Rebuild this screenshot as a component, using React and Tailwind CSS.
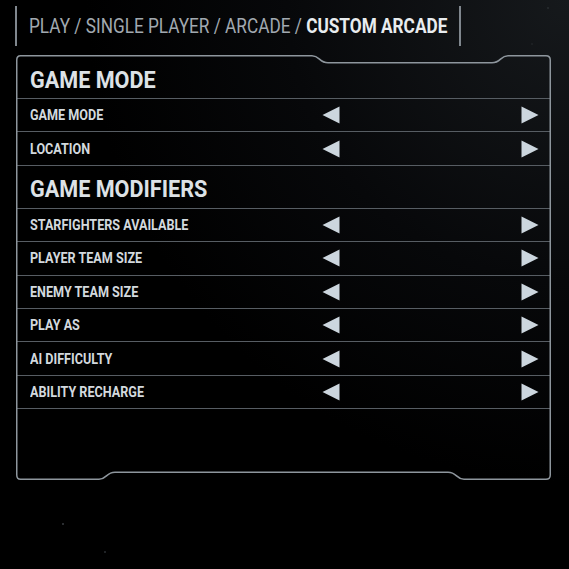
import React from 'react';

const font = { fontFamily: 'Roboto, "Liberation Sans", sans-serif' };

const sections = [
    { title: 'GAME MODE', rows: ['GAME MODE', 'LOCATION'] },
    {
        title: 'GAME MODIFIERS',
        rows: ['STARFIGHTERS AVAILABLE', 'PLAYER TEAM SIZE', 'ENEMY TEAM SIZE', 'PLAY AS', 'AI DIFFICULTY', 'ABILITY RECHARGE'],
    },
];

function Arrow({ dir }) {
    return (
        <svg width="18" height="18" viewBox="0 0 18 18">
            {dir === 'left' ? (
                <polygon points="17.5,0.5 17.5,17.5 0.5,9" fill="#ccd6de" />
            ) : (
                <polygon points="0.5,0.5 0.5,17.5 17.5,9" fill="#ccd6de" />
            )}
        </svg>
    );
}

function Frame() {
    const d = [
        'M 4.5 0.75',
        'L 296 0.75',
        'C 304 0.75 303 7.75 312 7.75',
        'L 476 7.75',
        'C 485 7.75 484 0.75 492 0.75',
        'L 530 0.75',
        'Q 534.25 0.75 534.25 5',
        'L 534.25 420',
        'Q 534.25 424.25 530 424.25',
        'L 448 424.25',
        'C 440 424.25 441 417.25 432 417.25',
        'L 99 417.25',
        'C 90 417.25 91 424.25 83 424.25',
        'L 4.5 424.25',
        'Q 0.75 424.25 0.75 420',
        'L 0.75 5',
        'Q 0.75 0.75 4.5 0.75 Z',
    ].join(' ');
    return (
        <svg className="absolute inset-0 pointer-events-none" width="535" height="425" viewBox="0 0 535 425">
            <path d={d} fill="none" stroke="#8e969d" strokeWidth="1.5" />
        </svg>
    );
}

export default function App() {
    return (
        <div
            className="relative w-[569px] h-[569px] overflow-hidden bg-black pt-[6px]"
            style={{ ...font, backgroundImage: 'radial-gradient(circle at 100% 0%, #16191c 0%, #07080a 35%, #000 60%)' }}
        >
            <div className="ml-[15px] w-[446px] h-[40px] border-l-2 border-r-2 border-[#80878e] flex items-center pl-[12px]">
                <span className="inline-block whitespace-nowrap origin-left scale-x-[0.82] text-[21px] leading-none text-[#a1a9b0]">
                    PLAY / SINGLE PLAYER / ARCADE / <span className="font-bold text-[#e8ecef]">CUSTOM ARCADE</span>
                </span>
            </div>

            <div className="relative ml-[16px] mt-[9px] w-[535px] h-[425px]">
                <Frame />
                <div className="pt-[2px]">
                    {sections.map((section, i) => (
                        <div key={section.title}>
                            <div
                                className={`${i === 0 ? 'h-[42px]' : 'h-[43px]'} flex items-center pl-[14px] pt-[4px] border-b border-[#575d63]`}
                            >
                                <span className="inline-block whitespace-nowrap origin-left scale-x-[0.9] text-[24px] font-bold text-[#dde2e6] leading-none">
                                    {section.title}
                                </span>
                            </div>
                            {section.rows.map((row) => (
                                <div key={row} className="h-[33.4px] flex items-center border-b border-[#575d63]">
                                    <span className="w-[306px] pl-[14px]">
                                        <span className="inline-block whitespace-nowrap origin-left scale-x-[0.9] text-[14px] font-bold text-[#d3d9de] leading-none">
                                            {row}
                                        </span>
                                    </span>
                                    <Arrow dir="left" />
                                    <span className="flex-1" />
                                    <span className="mr-[12px]">
                                        <Arrow dir="right" />
                                    </span>
                                </div>
                            ))}
                        </div>
                    ))}
                </div>
            </div>

            <div className="absolute w-[2px] h-[2px] bg-[#2a2d30] left-[62px] top-[523px]" />
            <div className="absolute w-[2px] h-[2px] bg-[#1f2225] left-[104px] top-[551px]" />
            <div className="absolute w-[2px] h-[2px] bg-[#23272a] left-[547px] top-[7px]" />
            <div className="absolute w-[2px] h-[2px] bg-[#1c1f22] left-[531px] top-[43px]" />
        </div>
    );
}
